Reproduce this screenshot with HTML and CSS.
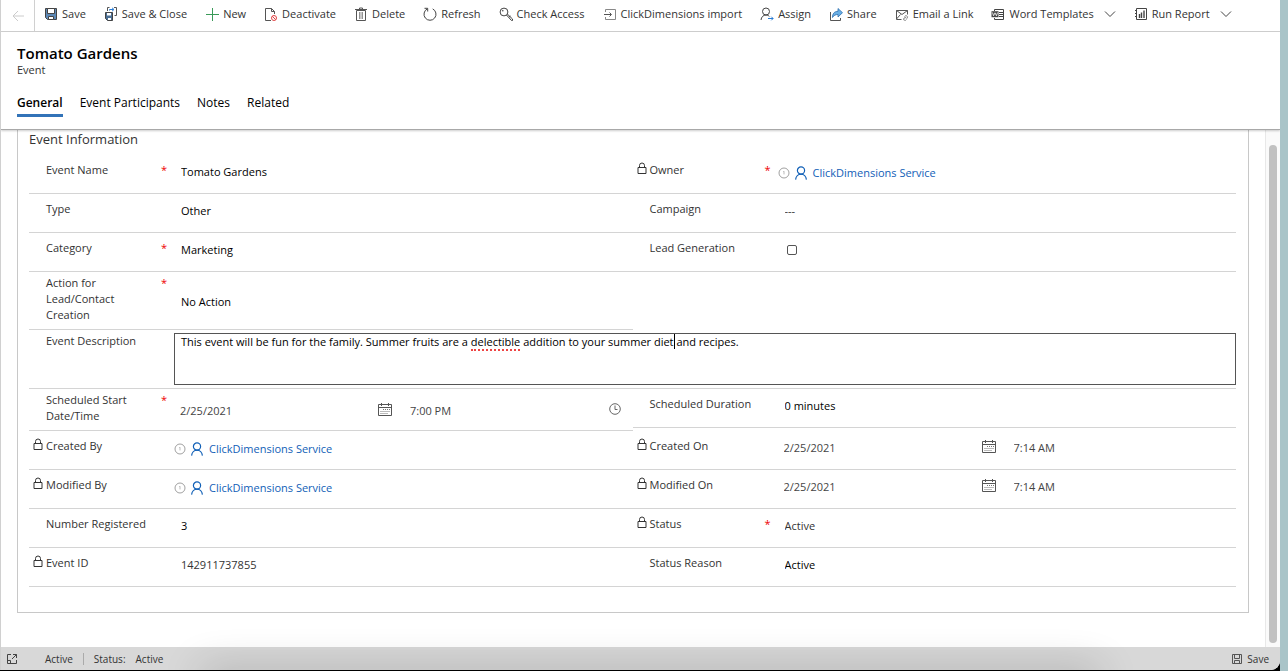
FILE: index.html
```html
<!DOCTYPE html>
<html lang="en">

<head>
    <meta charset="UTF-8">
    <meta name="viewport" content="width=device-width, initial-scale=1.0">
    <title>Event: Tomato Gardens</title>
    <link rel="stylesheet" href="styles.css">
</head>

<body>
    <!-- shared icons -->
    <svg class="icon-defs" aria-hidden="true">
        <symbol id="i-lock" viewBox="0 0 10 13">
            <path d="M1 5.5h8v6H1zM2.500 5.500V3.500a2.500 2.500 0 0 1 5 0v2" fill="none" stroke="#333" />
        </symbol>
        <symbol id="i-info" viewBox="0 0 12 12">
            <circle cx="6" cy="6" r="5" fill="none" stroke="#888" stroke-width=".8" />
            <path d="M5.300 4.700L6 4.200v3.200" fill="none" stroke="#aaa" stroke-width=".8" />
        </symbol>
        <symbol id="i-person" viewBox="0 0 14 14">
            <circle cx="7" cy="4.500" r="3.600" fill="none" stroke="#1160b7" stroke-width="1.200" />
            <path d="M1.600 13.600C1.900 10.500 4.200 8.200 7 8.200s5.100 2.300 5.400 5.400" fill="none" stroke="#1160b7" stroke-width="1.200" />
        </symbol>
        <symbol id="i-calendar" viewBox="0 0 14 13">
            <path d="M.5 1.500h13v11H.5zM.5 4.500h13M3.500 0v3M10.500 0v3" fill="none" stroke="#555" />
            <path d="M5 6.500h7M2.500 8.500H12M2.500 10.500H10" fill="none" stroke="#777" stroke-dasharray="1 1" />
        </symbol>
        <symbol id="i-chevron" viewBox="0 0 12 8">
            <path d="M1 1.500l5 5 5-5" fill="none" stroke="#444" />
        </symbol>
    </svg>

    <div class="screen">
        <div class="window">
            <nav class="command-bar">
                <button class="back" aria-label="Back">
                    <svg width="12" height="12" viewBox="0 0 12 12"><path d="M12 6H1M6 1L1 6l5 5" fill="none" stroke="#ccc" /></svg>
                </button>
                <div class="commands">
                    <button class="command">
                        <svg viewBox="0 0 14 14">
                            <path d="M1.500 1.500h11v11h-9l-2-2z" fill="#5b87b5" stroke="#444" />
                            <path d="M3.500 1.500h7v5h-7z" fill="#fff" stroke="#444" />
                            <path d="M4.500 9.500h5v3h-5z" fill="#fff" stroke="#444" />
                        </svg>Save
                    </button>
                    <button class="command">
                        <svg viewBox="0 0 14 14">
                            <path d="M1.500 5.500h7v8h-5l-2-2z" fill="#4b6f94" stroke="#444" />
                            <path d="M3 6h4v2.500H3zM4 11h3v2H4z" fill="#fff" />
                            <path d="M3.500 4V.5h2M10 .5h2.500v8h-2" fill="none" stroke="#555" />
                            <path d="M5.500 3.500v-1h4M8 .8l2 1.700-2 1.700" fill="none" stroke="#2b7cd3" />
                        </svg>Save &amp; Close
                    </button>
                    <button class="command">
                        <svg viewBox="0 0 14 14"><path d="M7.500 1v13M1 7.500h13" fill="none" stroke="#3a9a58" /></svg>New
                    </button>
                    <button class="command">
                        <svg viewBox="0 0 14 14">
                            <path d="M7 13.500H1.500V1.500h6l3 3V7M7.500 1.500v3h3" fill="none" stroke="#555" />
                            <circle cx="10" cy="11" r="2.500" fill="#fff" stroke="#e04343" />
                            <path d="M8.300 9.300l3.400 3.400" stroke="#e04343" />
                        </svg>Deactivate
                    </button>
                    <button class="command">
                        <svg viewBox="0 0 14 14">
                            <path d="M2.500 3.500h9v10h-9zM1 2.500h12M5.500 2.500V1h3v1.500" fill="none" stroke="#555" />
                            <path d="M5.500 5v7M7 5v7M8.500 5v7" fill="none" stroke="#777" stroke-width=".8" />
                        </svg>Delete
                    </button>
                    <button class="command">
                        <svg viewBox="0 0 14 14">
                            <path d="M4.300 1.900A6 6 0 1 0 9.700 1.900M1.500 1.300h3.200v3.200" fill="none" stroke="#444" />
                        </svg>Refresh
                    </button>
                    <button class="command">
                        <svg viewBox="0 0 14 14">
                            <circle cx="5" cy="5" r="3.900" fill="none" stroke="#444" />
                            <circle cx="3.800" cy="3.800" r=".8" fill="#444" />
                            <path d="M7.500 8l5 5.500h1V12L8.300 7M10 10l1.500-1" fill="none" stroke="#444" />
                        </svg>Check Access
                    </button>
                    <button class="command">
                        <svg viewBox="0 0 14 14">
                            <path d="M2.500 5V2.500h10v10h-10V10" fill="none" stroke="#888" />
                            <path d="M1 7.500h7M6.500 5.500l2 2-2 2" fill="none" stroke="#555" />
                        </svg>ClickDimensions import
                    </button>
                    <button class="command">
                        <svg viewBox="0 0 14 14">
                            <circle cx="6" cy="4.500" r="3.500" fill="none" stroke="#444" />
                            <path d="M1 13c.3-3 2.300-5 5-5 1.500 0 2.600.6 3.400 1.500" fill="none" stroke="#444" />
                            <path d="M8 11.500h5M11.300 9.700l1.800 1.800-1.800 1.800" fill="none" stroke="#2b7cd3" />
                        </svg>Assign
                    </button>
                    <button class="command">
                        <svg viewBox="0 0 14 14">
                            <path d="M1.500 5v8.500h10v-2.500" fill="none" stroke="#555" />
                            <path d="M3.500 10.500c0-4 2-6.200 5.500-6.200V1.500l4.500 4.200L9 10V7.500c-2.500 0-4 .8-5.500 3z" fill="#69afe5" stroke="#2f6fae" stroke-width=".8" />
                        </svg>Share
                    </button>
                    <button class="command">
                        <svg viewBox="0 0 14 14">
                            <path d="M6.500 12.500h-5v-9h11v4M1.500 3.500l5.500 4 5.500-4M1.500 12l4-4.500" fill="none" stroke="#555" />
                            <path d="M9.500 9.500l1.500-1 1.700 1.300-1 2M11 10.500l-2 .5-.5 1.700 1.800.8 1.200-1" fill="none" stroke="#888" />
                        </svg>Email a Link
                    </button>
                    <button class="command">
                        <svg viewBox="0 0 14 14">
                            <path d="M3.500 4V2.500h9v10h-9V11M8 5.500h4.500M8 9.500h4.500M8 7.500h4.500" fill="none" stroke="#444" />
                            <path d="M.5 4.200h7v6h-7z" fill="#444" />
                            <path d="M1.500 5.500l1 3.300L4 5.800l1.500 3 1-3.300" fill="none" stroke="#fff" stroke-width=".8" />
                        </svg>Word Templates
                        <svg class="chevron" viewBox="0 0 12 8"><use href="#i-chevron" /></svg>
                    </button>
                    <button class="command">
                        <svg viewBox="0 0 14 14">
                            <path d="M2.500 1.500h10v11h-10zM1 3.500h2M1 6.500h2M1 9.500h2" fill="none" stroke="#444" />
                            <path d="M5.500 7v4M7.500 5.500v5.500M10 3.500v7.500" stroke="#444" stroke-width="1.400" />
                        </svg>Run Report
                        <svg class="chevron" viewBox="0 0 12 8"><use href="#i-chevron" /></svg>
                    </button>
                </div>
            </nav>

            <header class="record-header">
                <h1>Tomato Gardens</h1>
                <p class="entity">Event</p>
                <nav class="tabs">
                    <a href="#general" class="active">General</a>
                    <a href="#participants">Event Participants</a>
                    <a href="#notes">Notes</a>
                    <a href="#related">Related</a>
                </nav>
            </header>

            <main class="content">
                <form class="section" id="general">
                    <h2>Event Information</h2>
                    <div class="columns">
                        <div class="column">
                            <div class="field">
                                <label for="eventName">Event Name</label><span class="required">*</span>
                                <input type="text" id="eventName" value="Tomato Gardens">
                            </div>
                            <div class="field">
                                <label for="type">Type</label>
                                <input type="text" id="type" value="Other">
                            </div>
                            <div class="field">
                                <label for="category">Category</label><span class="required">*</span>
                                <input type="text" id="category" value="Marketing">
                            </div>
                            <div class="field multiline">
                                <label for="action">Action for Lead/Contact Creation</label><span class="required">*</span>
                                <input type="text" id="action" value="No Action">
                            </div>
                        </div>
                        <div class="column">
                            <div class="field">
                                <svg class="lock"><use href="#i-lock" /></svg>
                                <label for="owner">Owner</label><span class="required">*</span>
                                <div class="lookup">
                                    <svg class="info"><use href="#i-info" /></svg>
                                    <svg class="person"><use href="#i-person" /></svg>
                                    <a href="#owner" id="owner">ClickDimensions Service</a>
                                </div>
                            </div>
                            <div class="field">
                                <label for="campaign">Campaign</label>
                                <input type="text" id="campaign" class="muted" value="---">
                            </div>
                            <div class="field">
                                <label for="leadGen">Lead Generation</label>
                                <div class="check"><input type="checkbox" id="leadGen"></div>
                            </div>
                        </div>
                    </div>

                    <div class="field description">
                        <label for="description">Event Description</label>
                        <div class="editor">
                            <textarea id="description" spellcheck="false">This event will be fun for the family. Summer fruits are a delectible addition to your summer diet and recipes.</textarea>
                            <div class="marks" aria-hidden="true">This event will be fun for the family. Summer fruits are a <span class="misspelled">delectible</span> addition to your summer diet<span class="caret"></span></div>
                        </div>
                    </div>

                    <div class="columns">
                        <div class="column">
                            <div class="field multiline">
                                <label for="startDate">Scheduled Start Date/Time</label><span class="required">*</span>
                                <div class="datetime">
                                    <input type="text" id="startDate" value="2/25/2021">
                                    <svg class="calendar"><use href="#i-calendar" /></svg>
                                    <input type="text" aria-label="Start time" value="7:00 PM">
                                    <svg class="clock" viewBox="0 0 12 12">
                                        <circle cx="6" cy="6" r="5.300" fill="none" stroke="#666" />
                                        <path d="M6 2.500V6.500h2.500" fill="none" stroke="#666" />
                                    </svg>
                                </div>
                            </div>
                            <div class="field">
                                <svg class="lock"><use href="#i-lock" /></svg>
                                <label for="createdBy">Created By</label>
                                <div class="lookup">
                                    <svg class="info"><use href="#i-info" /></svg>
                                    <svg class="person"><use href="#i-person" /></svg>
                                    <a href="#user" id="createdBy">ClickDimensions Service</a>
                                </div>
                            </div>
                            <div class="field">
                                <svg class="lock"><use href="#i-lock" /></svg>
                                <label for="modifiedBy">Modified By</label>
                                <div class="lookup">
                                    <svg class="info"><use href="#i-info" /></svg>
                                    <svg class="person"><use href="#i-person" /></svg>
                                    <a href="#user" id="modifiedBy">ClickDimensions Service</a>
                                </div>
                            </div>
                            <div class="field">
                                <label for="registered">Number Registered</label>
                                <input type="text" id="registered" value="3">
                            </div>
                            <div class="field">
                                <svg class="lock"><use href="#i-lock" /></svg>
                                <label for="eventId">Event ID</label>
                                <input type="text" id="eventId" class="muted" value="142911737855" readonly>
                            </div>
                        </div>
                        <div class="column">
                            <div class="field">
                                <label for="duration">Scheduled Duration</label>
                                <input type="text" id="duration" value="0 minutes">
                            </div>
                            <div class="field spaced">
                                <svg class="lock"><use href="#i-lock" /></svg>
                                <label for="createdOn">Created On</label>
                                <div class="datetime">
                                    <input type="text" id="createdOn" value="2/25/2021" readonly>
                                    <svg class="calendar"><use href="#i-calendar" /></svg>
                                    <input type="text" aria-label="Created time" value="7:14 AM" readonly>
                                </div>
                            </div>
                            <div class="field">
                                <svg class="lock"><use href="#i-lock" /></svg>
                                <label for="modifiedOn">Modified On</label>
                                <div class="datetime">
                                    <input type="text" id="modifiedOn" value="2/25/2021" readonly>
                                    <svg class="calendar"><use href="#i-calendar" /></svg>
                                    <input type="text" aria-label="Modified time" value="7:14 AM" readonly>
                                </div>
                            </div>
                            <div class="field">
                                <svg class="lock"><use href="#i-lock" /></svg>
                                <label for="status">Status</label><span class="required">*</span>
                                <input type="text" id="status" class="muted" value="Active" readonly>
                            </div>
                            <div class="field">
                                <label for="statusReason">Status Reason</label>
                                <input type="text" id="statusReason" value="Active">
                            </div>
                        </div>
                    </div>
                </form>
                <div class="scrollbar"><div class="thumb"></div></div>
            </main>

            <footer class="status-bar">
                <svg width="12" height="12" viewBox="0 0 12 12">
                    <path d="M5 1.500H1.500v9h9V7M1.500 7.500h3v3M6 6l4.500-4.500M7 1.500h3.500V5" fill="none" stroke="#444" />
                </svg>
                <span class="state">Active</span>
                <span class="status-label">Status:</span>
                <span>Active</span>
                <button class="footer-save">
                    <svg width="12" height="12" viewBox="0 0 12 12">
                        <path d="M1.500 1.500h9v9h-9zM3.500 1.500v4h5v-4M3.500 10.500v-3h5v3" fill="none" stroke="#555" />
                    </svg>Save
                </button>
            </footer>
            <div class="dock-shadow"></div>
        </div>
    </div>
</body>

</html>
```
FILE: styles.css
```css
* {
    box-sizing: border-box;
}

body {
    margin: 0;
    background-color: #a9c4c8;
    font-family: "Open Sans", "Noto Sans", sans-serif;
    font-size: 11px;
    line-height: 16px;
    color: #333;
}

.icon-defs {
    display: none;
}

svg {
    flex: none;
}

button {
    padding: 0;
    border: none;
    background: none;
    font: inherit;
    color: inherit;
    cursor: pointer;
}

.screen {
    height: 100vh;
    margin-right: 8px;
    padding-bottom: 1px;
    background-color: #000;
}

.window {
    position: relative;
    display: flex;
    flex-direction: column;
    height: 100%;
    border-left: 1px solid #d0d0d0;
    border-bottom-right-radius: 9px;
    background-color: #fff;
    overflow: hidden;
}

/* command bar */
.command-bar {
    display: flex;
    height: 32px;
    flex: none;
    border-bottom: 1px solid #d0d0d0;
}

.back {
    display: flex;
    align-items: center;
    justify-content: center;
    width: 34px;
    border-right: 1px solid #d0d0d0;
}

.commands {
    display: flex;
    gap: 18px;
    padding: 0 0 3px 9px;
}

.command {
    display: flex;
    align-items: center;
    gap: 4px;
    white-space: nowrap;
}

.command svg {
    width: 14px;
    height: 14px;
}

.command .chevron {
    width: 12px;
    height: 8px;
    margin-left: 6px;
}

/* record header */
.record-header {
    flex: none;
    height: 98px;
    padding: 11px 16px 0;
    border-bottom: 1px solid #a8a8a8;
    box-shadow: 0 1px 2px rgba(0, 0, 0, 0.2);
    z-index: 1;
}

h1 {
    margin: 0;
    font-size: 15px;
    line-height: 20px;
    font-weight: 600;
    color: #000;
}

.entity {
    margin: 0;
    font-size: 11px;
    line-height: 14px;
}

.tabs {
    display: flex;
    gap: 17px;
    margin-top: 18px;
    font-size: 12px;
}

.tabs a {
    padding-bottom: 3px;
    border-bottom: 3px solid transparent;
    color: #000;
    text-decoration: none;
}

.tabs .active {
    border-color: #3273b8;
    font-weight: 600;
}

/* form */
.content {
    display: flex;
    flex: 1;
    min-height: 0;
    overflow: hidden;
}

.section {
    flex: 1;
    align-self: flex-start;
    margin: 0 16px;
    padding: 1px 12px 25px 11px;
    border: 1px solid #c8c8c8;
    border-top: none;
}

h2 {
    margin: 0 0 8px;
    font-size: 13px;
    line-height: 16px;
    font-weight: normal;
}

.columns {
    display: grid;
    grid-template-columns: 1fr 1fr;
}

.field {
    display: grid;
    grid-template-columns: 17px 115px 13px 1fr;
    grid-template-rows: 31px;
    height: 39px;
    padding-top: 7px;
    border-bottom: 1px solid #d4d4d4;
}

.field label {
    grid-column: 2;
    grid-row: 1;
    padding-right: 12px;
}

.lock {
    grid-column: 1;
    grid-row: 1;
    width: 10px;
    height: 13px;
    margin-left: 4px;
}

.required {
    grid-column: 3;
    grid-row: 1;
    color: #e00;
}

.field > input,
.lookup,
.check,
.datetime,
.editor {
    grid-column: 4;
    grid-row: 1;
}

.field input[type="text"] {
    width: 100%;
    min-width: 0;
    height: 16px;
    margin-top: 2px;
    padding: 0 7px;
    border: none;
    outline: none;
    background: none;
    font: inherit;
    color: #000;
}

.field .muted[type="text"] {
    color: #333;
}

.lookup {
    display: flex;
    align-items: center;
    height: 16px;
    margin-top: 3px;
}

.lookup a {
    margin-left: 5px;
    color: #1160b7;
    text-decoration: none;
}

.info {
    width: 12px;
    height: 12px;
    margin-right: 4px;
}

.person {
    width: 14px;
    height: 14px;
}

.check input {
    display: block;
    appearance: none;
    width: 10px;
    height: 10px;
    margin: 5px 9px;
    border: 1px solid #555;
    border-radius: 2px;
}

.datetime {
    display: grid;
    grid-template-columns: 204px 26px 205px 1fr;
    height: 16px;
    margin-top: 2px;
}

.datetime input[type="text"] {
    margin: 0;
    padding: 0 6px;
    color: #444;
}

.calendar {
    width: 14px;
    height: 13px;
}

.clock {
    width: 12px;
    height: 12px;
}

.multiline {
    height: auto;
    grid-template-rows: auto;
    padding: 3px 0;
}

.multiline label {
    margin-bottom: 3px;
}

.multiline > input,
.multiline .datetime {
    align-self: center;
}

.spaced {
    height: 42px;
    padding-top: 10px;
}

.description {
    height: 59px;
    grid-template-rows: auto;
    padding: 3px 0;
}

.editor {
    position: relative;
}

.editor textarea {
    display: block;
    width: 100%;
    height: 52px;
    padding: 0 6px;
    border: 1px solid #555;
    outline: none;
    resize: none;
    font: inherit;
    color: #000;
}

/* spelling mark and caret, laid over the text box */
.marks {
    position: absolute;
    inset: 1px;
    padding: 0 6px;
    color: transparent;
    pointer-events: none;
}

.misspelled {
    border-bottom: 2px dotted #e44;
}

.caret {
    margin-right: -1px;
    border-left: 1px solid #000;
}

.scrollbar {
    width: 15px;
    padding: 15px 3px 4px;
    border-left: 1px solid #e8e8e8;
    background-color: #fafafa;
}

.thumb {
    height: 100%;
    border-radius: 4px;
    background-color: #c1c1c1;
}

/* status bar */
.status-bar {
    display: flex;
    align-items: center;
    flex: none;
    height: 23px;
    padding: 0 11px 0 5px;
    background-color: #d8d8d8;
    font-size: 10px;
}

.state {
    margin-left: 27px;
    padding-right: 10px;
    border-right: 1px solid #aaa;
    line-height: 12px;
}

.status-label {
    margin: 0 10px;
}

.footer-save {
    display: flex;
    align-items: center;
    gap: 4px;
    margin-left: auto;
}

.dock-shadow {
    position: absolute;
    left: 200px;
    right: 180px;
    bottom: -20px;
    height: 20px;
    box-shadow: 0 0 40px rgba(0, 0, 0, 0.24);
    pointer-events: none;
}
```
